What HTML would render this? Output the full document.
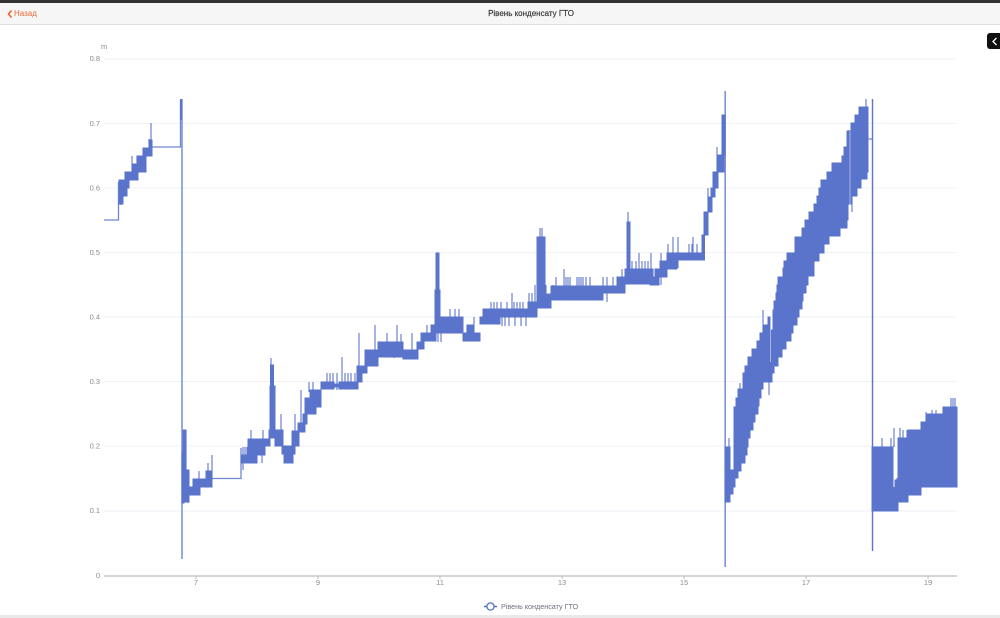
<!DOCTYPE html>
<html lang="uk">
<head>
<meta charset="utf-8">
<title>Рівень конденсату ГТО</title>
<style>
html,body{margin:0;padding:0;background:#fff;width:1000px;height:618px;overflow:hidden;font-family:"Liberation Sans","Noto Sans CJK SC",sans-serif}
#wrap{position:relative;width:1000px;height:618px;overflow:hidden}
#top{position:absolute;left:0;top:0;width:1000px;height:3px;background:#333}
#head{position:absolute;left:0;top:3px;width:1000px;height:21px;background:#f6f6f6;border-bottom:1px solid #dedede}
#back{position:absolute;left:14px;top:6px;font-size:8px;line-height:10px;color:#ea6a35}
#title{position:absolute;left:0;top:6px;width:1062px;text-align:center;font-size:8px;line-height:10px;color:#333;-webkit-text-stroke:.15px #333}
#foot{position:absolute;left:0;top:615px;width:1000px;height:3px;background:#e9e9e9}
svg{position:absolute;left:0;top:0}
#data{filter:blur(.3px)}
</style>
</head>
<body>
<div id="wrap">
<svg width="1000" height="618" viewBox="0 0 1000 618">
<path d="M104 59H957M104 123.5H957M104 188H957M104 252.5H957M104 317H957M104 381.5H957M104 446H957M104 511H957" stroke="#eff0f8" stroke-width="1"/>
<path d="M104 576H957" stroke="#c9c9c9" stroke-width="1.5"/>
<path d="M196 576v3M318 576v3M440 576v3M562 576v3M684 576v3M806 576v3M928 576v3" stroke="#bbb" stroke-width="1"/>
<g font-size="7.5" fill="#8a8b92" font-family="Liberation Sans, sans-serif">
<text x="101" y="49">m</text>
<g text-anchor="end">
<text x="100" y="61">0.8</text><text x="100" y="126">0.7</text><text x="100" y="190.5">0.6</text><text x="100" y="255">0.5</text><text x="100" y="319.5">0.4</text><text x="100" y="384">0.3</text><text x="100" y="448.5">0.2</text><text x="100" y="513">0.1</text><text x="100" y="578">0</text>
</g>
<g text-anchor="middle">
<text x="196" y="585">7</text><text x="318" y="585">9</text><text x="440" y="585">11</text><text x="562" y="585">13</text><text x="684" y="585">15</text><text x="806" y="585">17</text><text x="928" y="585">19</text>
</g>
</g>
<g id="data">
<path d="M104 220H118.5V182M152 147H180.5V100M212 478.5H241V448M868 139H872" fill="none" stroke="#6f86d3" stroke-width="1.3"/>
<path d="M182 99V559M725.2 91V567" stroke="#7f92d9" stroke-width="1.6" fill="none"/>
<path d="M872.5 99V551" stroke="#5a73cb" stroke-width="1.4" fill="none"/>
<path d="M181 99V120" stroke="#5a73cb" stroke-width="2" fill="none"/>
<path fill="none" stroke="#5f77cc" stroke-width="1.1" d="M121 180V205M123 180V196M125 180V196M132 156V172M137 156V172M141 156V165M143 156V165M151 123V147M149 139V155M199 471V490M208 463V479M212 455V480M188 470V503M184 430V503M186 430V480M243 447V470M245 447V456M247 447V456M251 430V445M263 430V440M262 455V463M281 414V432M271 358V380M295 414V440M301 390V425M309 382V392M313 382V392M327 373V384M330 373V384M333 373V384M337 373V390M342 357V384M345 373V384M348 373V384M351 373V384M355 373V384M359 333V368M375 325V352M387 333V345M397 325V345M401 334V345M412 333V350M427 325V338M394 342V358M450 309V320M455 309V320M459 309V320M467 325V335M474 317V335M484 309V320M491 302V312M494 302V312M497 302V312M502 317V326M505 317V326M509 317V326M515 317V326M521 317V326M526 317V326M501 302V312M507 302V312M512 293V312M514 302V312M517 302V312M520 302V312M523 302V312M529 293V305M532 293V305M535 285V305M540 228V240M542 228V240M546 285V296M553 285V296M556 277V288M564 269V288M566 277V288M568 277V288M570 277V288M577 277V288M579 277V288M581 277V288M583 277V288M586 277V288M590 277V288M603 277V288M607 277V302M613 277V288M622 269V282M628 212V270M632 261V272M636 261V272M639 253V272M642 261V272M645 261V272M648 261V272M651 253V282M661 253V285M668 244V262M673 237V255M678 237V268M689 244V256M692 244V256M693 237V256M697 244V256M438 333V342M441 333V342M470 325V335M708 188V212M717 147V172M722 147V165M729 438V460M740 383V395M763 310V340M769 317V395M866 99V120M852 175V212M849 130V170M777 290V300M894 428V447M900 428V440M882 438V447M891 438V447M903 430V440M907 430V440M926 412V425M932 410V418M936 410V418M951 398V408M953 398V408M955 398V408M875 500V511M879 500V511M881 500V511M887 500V511M889 500V511M893 495V511M894 487V505M897 478V495"/>
<path fill="#5a73cb" stroke="#5a73cb" stroke-width="1" d="M119 180H123V204H119ZM122 180H127V196H122ZM125 172H129V188H125ZM129 172H138V180H129ZM132 164H138V180H132ZM137 156H146V172H137ZM143 148H152V156H143ZM150 140H152V156H150ZM182 452H184V503H182ZM183 430H186V480H183ZM183 470H189V502H183ZM186 487H200V495H186ZM193 479H200V495H193ZM200 479H212V487H200ZM206 471H212V487H206ZM241 455H257V463H241ZM248 439H265V455H248ZM257 439H270V446H257ZM269 430H283V438H269ZM270 386H275V438H270ZM270.5 365H273.5V390H270.5ZM275 430H283V446H275ZM282 446H295V454H282ZM284 454H293V463H284ZM292 431H299V446H292ZM298 423H305V432H298ZM303 414H307V424H303ZM305 398H316V414H305ZM310 390H321V407H310ZM321 382H334V389H321ZM334 384H339V387H334ZM339 382H358V389H339ZM357 373H362V382H357ZM357 366H367V373H357ZM365 350H378V366H365ZM378 342H403V357H378ZM403 350H418V359H403ZM417 342H424V349H417ZM421 333H436V341H421ZM431 325H440V333H431ZM435 290H440V325H435ZM436 253H439V292H436ZM440 317H463V333H440ZM463 333H480V341H463ZM467 325H473V333H467ZM480 317H500V324H480ZM483 309H537V317H483ZM528 302H547V308H528ZM537 237H545V302H537ZM543 294H551V308H543ZM551 286H603V300H551ZM603 286H625V293H603ZM617 277H625V286H617ZM625 269H653V284H625ZM627 222H630V269H627ZM650 277H659V285H650ZM655 269H667V277H655ZM660 261H677V269H660ZM667 253H702V260H667ZM702 235H704.5V260H702ZM704 212H708V235H704ZM708 197H712V212H708ZM711 188H715V197H711ZM713 172H718V188H713ZM718 155H724V172H718ZM722 115H725V155H722ZM725 447H730V502H725ZM726 470H733V494H726ZM733 470H735V487H733ZM734 407V478H738V471H741V463H745V455H747V447H748V438H750V430H753V422H755V414H758V406H759V398H761V389H763V382H772V373H774V366H778V357H782V349H786V341H791V333H793V325H797V317H799V309H802V301H803V293H806V285H808V276H814V261H819V253H824V244H829V236H840V228H847V220H848V204H851V196H857V188H861V179H867V172H868V107H859V115H855V123H851V131H847V147H844V156H842V163H832V172H827V180H821V188H819V196H817V204H814V212H809V220H805V228H802V237H795V253H787V261H784V268H783V277H778V285H777V293H776V301H774V310H773V330H770V317H768V325H763V333H760V341H757V349H752V357H748V366H745V373H743V389H738V398H736V407ZM872 447H893V511H872ZM893 495H898V511H893ZM895 480H898V500H895ZM898 438H908V502H898ZM908 430H921V495H908ZM921 422H957V487H921ZM927 414H957V430H927ZM943 407H957V420H943Z"/>
<path d="M850 130V205M770.5 320V362" stroke="#b9c5ec" stroke-width=".8" fill="none"/>
</g>
<path d="M484 606.5H497" stroke="#5470c6" stroke-width="1.5"/>
<circle cx="490.5" cy="606.5" r="3.6" fill="#fff" stroke="#5470c6" stroke-width="1.3"/>
<text x="501" y="609" font-size="7.2" fill="#6e7079" font-family="Liberation Sans, sans-serif">Рівень конденсату ГТО</text>
<path d="M1000 33H990a3 3 0 0 0 -3 3V46a3 3 0 0 0 3 3H1000Z" fill="#111"/>
<path d="M996.5 38L993 41.5L996.5 45" fill="none" stroke="#fff" stroke-width="1.3"/>
</svg>
<div id="top"></div>
<div id="head">
<div id="back">Назад</div>
<div id="title">Рівень конденсату ГТО</div>
</div>
<div id="foot"></div>
<svg width="20" height="24" viewBox="0 0 20 24"><path d="M11.5 10.5L8.5 14L11.5 17.5" fill="none" stroke="#ea5f25" stroke-width="1.5"/></svg>
</div>
</body>
</html>
